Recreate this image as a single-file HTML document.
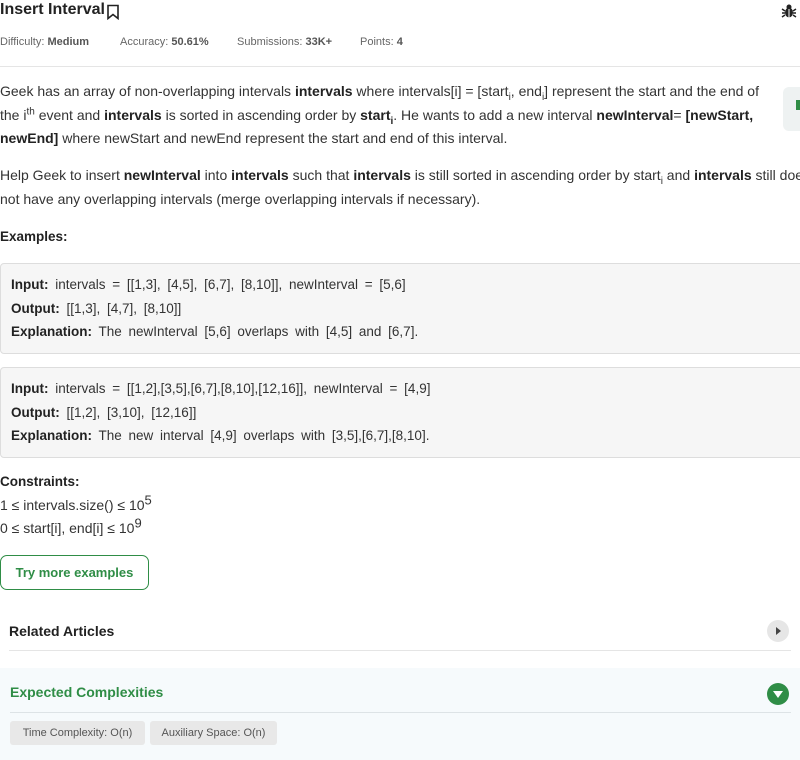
<!DOCTYPE html>
<html><head><meta charset="utf-8"><style>
*{margin:0;padding:0;box-sizing:border-box}
body{width:800px;height:760px;overflow:hidden;background:#fff;font-family:"Liberation Sans",sans-serif;color:#333;position:relative}
.a{position:absolute;white-space:nowrap}
p.t{font-size:14px;color:#333;line-height:23.5px}
b{color:#222}
.box{position:absolute;left:0;width:806px;background:#f6f6f6;border:1px solid #ddd;border-radius:4px;padding:9px 10px;font-size:13.5px;line-height:23.5px;word-spacing:3px}
sub,sup{font-size:10px;line-height:0}
</style></head><body>
<div class="a" style="left:0;top:1px;font-size:16px;font-weight:bold;color:#222">Insert Interval</div>
<svg class="a" style="left:106px;top:4px" width="14" height="16" viewBox="0 0 14 16"><path d="M2 1.5h10v13L7 10.5 2 14.5z" fill="none" stroke="#222" stroke-width="1.6"/></svg>
<svg class="a" style="left:781px;top:3px" width="16" height="16" viewBox="0 0 16 16"><ellipse cx="8" cy="9.5" rx="4" ry="5" fill="#222"/><circle cx="8" cy="4" r="2.5" fill="#222"/><path d="M1 6l3 2M15 6l-3 2M1 10h3M15 10h-3M1 14l3-2M15 14l-3-2" stroke="#222" stroke-width="1.5"/><path d="M8 6v9" stroke="#fff" stroke-width="1"/></svg>
<div class="a" style="left:0;top:36px;font-size:11px;color:#666">Difficulty: <b style="color:#555">Medium</b></div>
<div class="a" style="left:120px;top:36px;font-size:11px;color:#666">Accuracy: <b style="color:#555">50.61%</b></div>
<div class="a" style="left:237px;top:36px;font-size:11px;color:#666">Submissions: <b style="color:#555">33K+</b></div>
<div class="a" style="left:360px;top:36px;font-size:11px;color:#666">Points: <b style="color:#555">4</b></div>
<div class="a" style="left:0;top:66px;width:800px;height:1px;background:#e5e5e5"></div>
<div class="a" style="left:783px;top:87px;width:30px;height:44px;background:#eef2f2;border-radius:6px"></div>
<div class="a" style="left:796px;top:100px;width:6px;height:10px;background:#2f8d46"></div>
<div class="a" style="left:0;top:80px;width:780px;white-space:normal"><p class="t">Geek has an array of non-overlapping intervals <b>intervals</b> where intervals[i] = [start<sub>i</sub>, end<sub>i</sub>] represent the start and the end of the i<sup>th</sup> event and <b>intervals</b> is sorted in ascending order by <b>start<sub>i</sub></b>. He wants to add a new interval <b>newInterval</b>= <b>[newStart, newEnd]</b> where newStart and newEnd represent the start and end of this interval.</p></div>
<div class="a" style="left:0;top:164px;width:810px;white-space:normal"><p class="t">Help Geek to insert <b>newInterval</b> into <b>intervals</b> such that <b>intervals</b> is still sorted in ascending order by start<sub>i</sub> and <b>intervals</b> still does not have any overlapping intervals (merge overlapping intervals if necessary).</p></div>
<div class="a" style="left:0;top:229px;font-size:13.5px;font-weight:bold;color:#222">Examples:</div>
<div class="box" style="top:263px;height:91px"><b>Input:</b> intervals = [[1,3], [4,5], [6,7], [8,10]], newInterval = [5,6]<br><b>Output:</b> [[1,3], [4,7], [8,10]]<br><b>Explanation:</b> The newInterval [5,6] overlaps with [4,5] and [6,7].</div>
<div class="box" style="top:367px;height:91px"><b>Input:</b> intervals = [[1,2],[3,5],[6,7],[8,10],[12,16]], newInterval = [4,9]<br><b>Output:</b> [[1,2], [3,10], [12,16]]<br><b>Explanation:</b> The new interval [4,9] overlaps with [3,5],[6,7],[8,10].</div>
<div class="a" style="left:0;top:474px;font-size:13.5px;font-weight:bold;color:#222">Constraints:</div>
<div class="a" style="left:0;top:497px;font-size:14px;color:#333">1 ≤ intervals.size() ≤ 10<sup style="font-size:13px">5</sup></div>
<div class="a" style="left:0;top:520px;font-size:14px;color:#333">0 ≤ start[i], end[i] ≤ 10<sup style="font-size:13px">9</sup></div>
<div class="a" style="left:0;top:555px;width:149px;height:35px;border:1px solid #2f8d46;border-radius:7px;color:#2f8d46;font-size:13px;font-weight:bold;text-align:center;line-height:33px">Try more examples</div>
<div class="a" style="left:9px;top:623px;font-size:14px;font-weight:bold;color:#222">Related Articles</div>
<div class="a" style="left:767px;top:620px;width:22px;height:22px;border-radius:50%;background:#e6e6e6"></div>
<div class="a" style="left:776px;top:627px;width:0;height:0;border-left:5px solid #444;border-top:4px solid transparent;border-bottom:4px solid transparent"></div>
<div class="a" style="left:9px;top:650px;width:782px;height:1px;background:#e5e5e5"></div>
<div class="a" style="left:0;top:668px;width:800px;height:92px;background:#f6fafc"></div>
<div class="a" style="left:10px;top:684px;font-size:14px;font-weight:bold;color:#2f8d46">Expected Complexities</div>
<div class="a" style="left:767px;top:683px;width:22px;height:22px;border-radius:50%;background:#2f8d46"></div>
<div class="a" style="left:773px;top:691px;width:0;height:0;border-top:7px solid #fff;border-left:5px solid transparent;border-right:5px solid transparent"></div>
<div class="a" style="left:10px;top:712px;width:781px;height:1px;background:#dde3e6"></div>
<div class="a" style="left:10px;top:721px;width:135px;height:24px;background:#e8e8e8;border-radius:3px;font-size:11px;color:#555;line-height:24px;text-align:center">Time Complexity: O(n)</div>
<div class="a" style="left:150px;top:721px;width:127px;height:24px;background:#e8e8e8;border-radius:3px;font-size:11px;color:#555;line-height:24px;text-align:center">Auxiliary Space: O(n)</div>
</body></html>
